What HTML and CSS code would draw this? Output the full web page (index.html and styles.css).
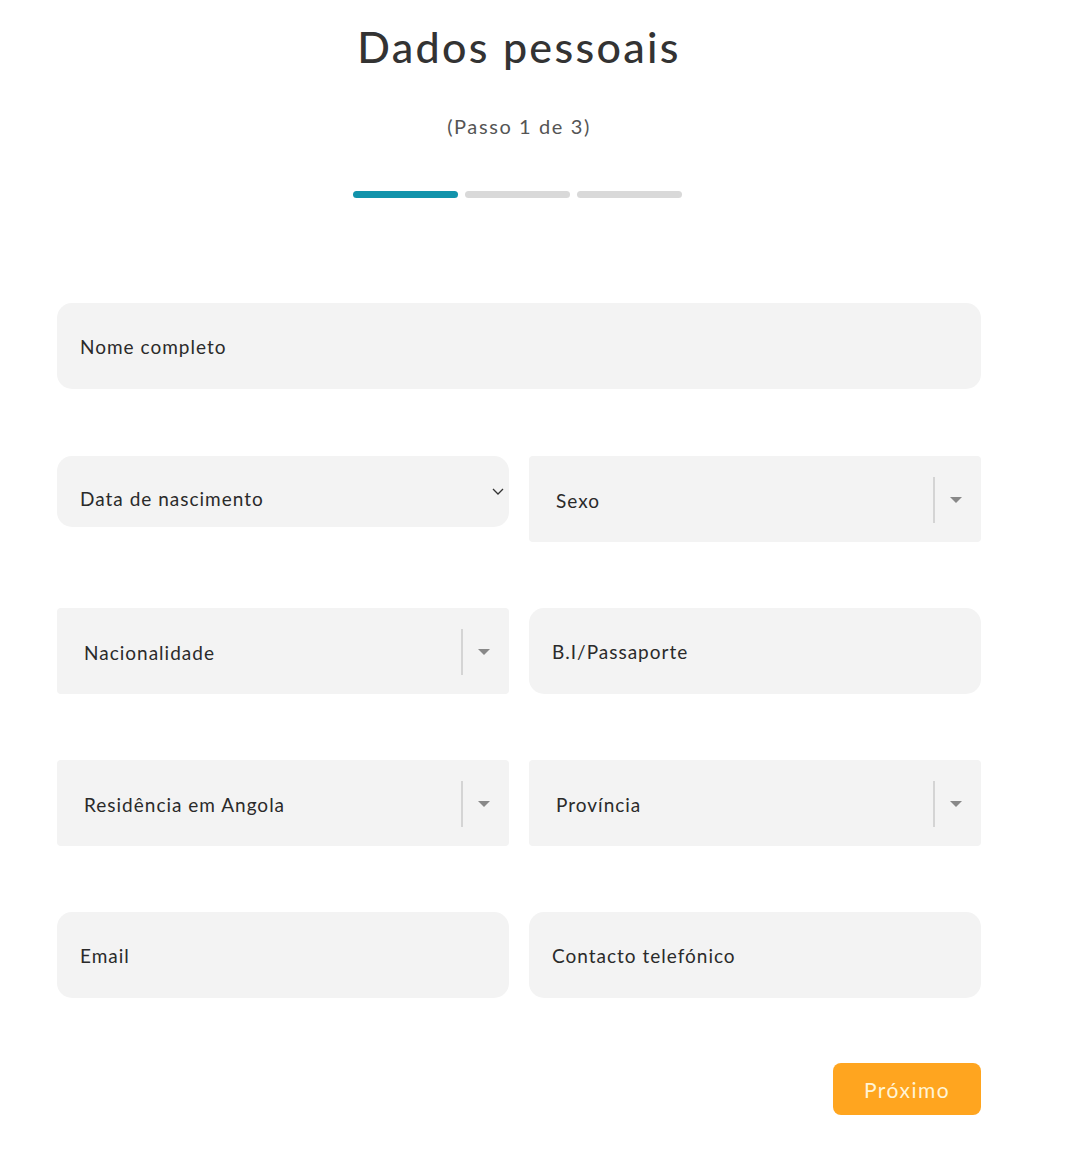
FILE: index.html
```html
<!DOCTYPE html>
<html lang="pt">
<head>
<meta charset="utf-8">
<title>Dados pessoais</title>
<link rel="stylesheet" href="styles.css">
</head>
<body>
<main class="page">
  <header class="head">
    <h1 class="title">Dados pessoais</h1>
    <p class="step">(Passo 1 de 3)</p>
    <div class="progress">
      <span class="seg seg-on"></span>
      <span class="seg"></span>
      <span class="seg"></span>
    </div>
  </header>

  <form class="form">
    <div class="row row-first">
      <div class="field field-full"><span class="label">Nome completo</span></div>
    </div>
    <div class="row">
      <div class="field field-date">
        <span class="label">Data de nascimento</span>
        <svg class="chev" width="12" height="7" viewBox="0 0 12 7"><path d="M1 1l5 5 5-5" fill="none" stroke="#333" stroke-width="1.3"/></svg>
      </div>
      <div class="field field-select">
        <span class="label label-sel2">Sexo</span>
        <span class="sep"></span>
        <span class="tri"></span>
      </div>
    </div>
    <div class="row">
      <div class="field field-select">
        <span class="label label-sel">Nacionalidade</span>
        <span class="sep"></span>
        <span class="tri"></span>
      </div>
      <div class="field"><span class="label label-r">B.I/Passaporte</span></div>
    </div>
    <div class="row">
      <div class="field field-select">
        <span class="label label-sel">Residência em Angola</span>
        <span class="sep"></span>
        <span class="tri"></span>
      </div>
      <div class="field field-select">
        <span class="label label-sel2">Província</span>
        <span class="sep"></span>
        <span class="tri"></span>
      </div>
    </div>
    <div class="row">
      <div class="field"><span class="label">Email</span></div>
      <div class="field"><span class="label label-r">Contacto telefónico</span></div>
    </div>
    <div class="actions">
      <button type="button" class="btn">Próximo</button>
    </div>
  </form>
</main>
</body>
</html>
```

FILE: styles.css
```css
* { box-sizing: border-box; }
html, body { margin: 0; padding: 0; background: #fff; }
body {
  font-family: "Lato", "Open Sans", sans-serif;
  color: #222;
}
.page {
  width: 924px;
  margin-left: 57px;
}
.head {
  display: flex;
  flex-direction: column;
  align-items: center;
  padding-top: 22px;
}
.title {
  margin: 0;
  font-size: 43px;
  line-height: 50px;
  font-weight: 500;
  color: #333;
  letter-spacing: 2.3px;
}
.step {
  margin: 41px 0 0;
  font-size: 20px;
  line-height: 26px;
  color: #555;
  letter-spacing: 1.6px;
}
.progress {
  display: flex;
  gap: 7px;
  margin-top: 52px;
  margin-left: -4px;
}
.seg {
  width: 105px;
  height: 7px;
  border-radius: 4px;
  background: #d9d9d9;
}
.seg-on { background: #1293ab; }

.form {
  margin-top: 105px;
  display: flex;
  flex-direction: column;
  gap: 66px;
}
.row {
  display: flex;
  gap: 20px;
  align-items: flex-start;
}
.row-first { margin-bottom: 1px; }
.field {
  flex: 1;
  height: 86px;
  background: #f3f3f3;
  border-radius: 15px;
  display: flex;
  align-items: center;
  position: relative;
  font-size: 19px;
  color: #2a2a2a;
  letter-spacing: 1px;
}
.field-full { flex: 1; }
.label { padding-left: 23px; }
.label-r { padding-left: 23px; }
.field-date { height: 71px; margin-bottom: 15px; padding-top: 14px; }
.field-date .chev {
  position: absolute;
  right: 5px;
  top: 32px;
}
.field-select {
  border-radius: 4px;
  padding-top: 2px;
}
.label-sel { padding-left: 27px; }
.label-sel2 { padding-left: 27px; }
.sep {
  position: absolute;
  right: 46px;
  top: 21px;
  width: 2px;
  height: 46px;
  background: #d4d4d4;
}
.tri {
  position: absolute;
  right: 19px;
  top: 41px;
  width: 0;
  height: 0;
  border-left: 6.5px solid transparent;
  border-right: 6.5px solid transparent;
  border-top: 6px solid #888;
}
.actions {
  display: flex;
  justify-content: flex-end;
  margin-top: -1px;
}
.btn {
  width: 148px;
  height: 52px;
  border: 0;
  border-radius: 8px;
  background: #ffa51f;
  color: #fff4d6;
  font-family: "Lato", "Open Sans", sans-serif;
  font-size: 21px;
  letter-spacing: 1.5px;
  cursor: pointer;
}
```
